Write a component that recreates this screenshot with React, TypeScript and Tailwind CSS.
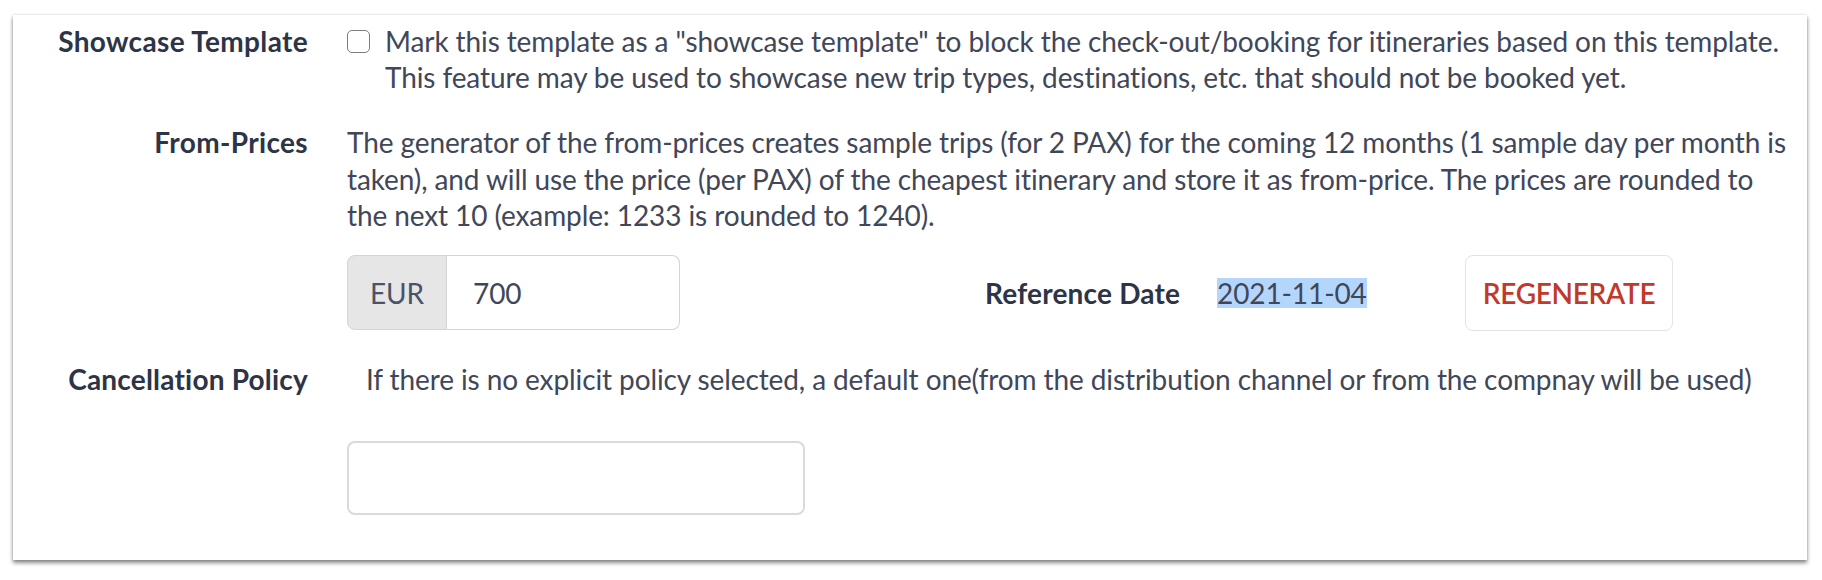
export default function App() {
  const font = { fontFamily: "Lato, 'Open Sans', sans-serif" };
  return (
    <div className="w-[1822px] h-[580px] bg-white pt-[15px] pl-[13px]" style={font}>
      <div className="w-[1794px] h-[545px] bg-white shadow-[0_3px_4px_rgba(0,0,0,0.45),0_0_3px_rgba(0,0,0,0.15)] pt-[8px] text-[28px] tracking-[-0.1px] text-[#3f4759]">
        {/* Row 1 */}
        <div className="flex">
          <div className="w-[295px] shrink-0 text-right font-bold tracking-[0.35px] text-[#2c3446] leading-[36px] whitespace-nowrap">Showcase Template</div>
          <div className="ml-[39px] flex items-start">
            <div className="mt-[7px] w-[23px] h-[23px] shrink-0 rounded-[5px] border-[1.5px] border-[#7d7d7d] bg-white" />
            <div className="ml-[15px] leading-[36px] whitespace-nowrap">
              <div>Mark this template as a "showcase template" to block the check-out/booking for itineraries based on this template.</div>
              <div>This feature may be used to showcase new trip types, destinations, etc. that should not be booked yet.</div>
            </div>
          </div>
        </div>
        {/* Row 2 */}
        <div className="flex mt-[29px]">
          <div className="w-[295px] shrink-0 text-right font-bold tracking-[0.35px] text-[#2c3446] leading-[36.5px] whitespace-nowrap">From-Prices</div>
          <div className="ml-[39px]">
            <div className="leading-[36.5px] whitespace-nowrap">
              <div>The generator of the from-prices creates sample trips (for 2 PAX) for the coming 12 months (1 sample day per month is</div>
              <div>taken), and will use the price (per PAX) of the cheapest itinerary and store it as from-price. The prices are rounded to</div>
              <div>the next 10 (example: 1233 is rounded to 1240).</div>
            </div>
            <div className="mt-[21px] flex items-center">
              <div className="flex h-[75px] w-[333px] shrink-0">
                <div className="w-[100px] shrink-0 flex items-center justify-center bg-[#e6e6e6] border border-[#d4d4d4] rounded-l-[8px] text-[#4a5367]">EUR</div>
                <div className="flex-1 flex items-center pl-[26px] border border-l-0 border-[#d4d4d4] rounded-r-[8px] bg-white text-[#3f4759]">700</div>
              </div>
              <div className="ml-[305px] w-[192px] shrink-0 font-bold tracking-[0.2px] text-[#2c3446] whitespace-nowrap">Reference Date</div>
              <div className="ml-[40px] w-[149px] shrink-0 whitespace-nowrap">
                <span className="bg-[#b4d6fd] leading-[30px] inline-block">2021-11-04</span>
              </div>
              <div className="ml-[99px] w-[208px] h-[76px] shrink-0 flex items-center justify-center rounded-[8px] border border-[#e3e3e3] bg-white text-[#c0392b] font-semibold tracking-[-0.3px]">REGENERATE</div>
            </div>
          </div>
        </div>
        {/* Row 3 */}
        <div className="flex mt-[30px]">
          <div className="w-[295px] shrink-0 text-right font-bold tracking-[0.2px] text-[#2c3446] leading-[36px] whitespace-nowrap">Cancellation Policy</div>
          <div className="ml-[39px] pl-[19px] leading-[36px] whitespace-nowrap">If there is no explicit policy selected, a default one(from the distribution channel or from the compnay will be used)</div>
        </div>
        {/* Row 4 */}
        <div className="mt-[44px] ml-[334px] w-[458px] h-[74px] rounded-[8px] border-2 border-[#dadada] bg-white" />
      </div>
    </div>
  );
}
